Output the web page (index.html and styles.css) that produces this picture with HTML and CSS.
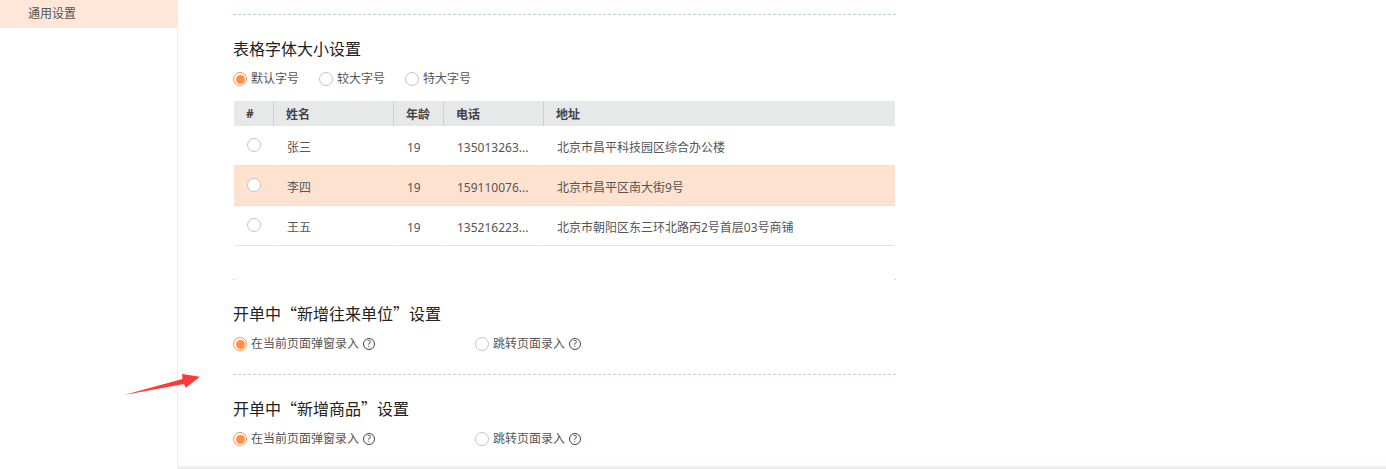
FILE: index.html
```html
<!DOCTYPE html>
<html lang="zh-CN">
<head>
  <meta charset="UTF-8">
  <meta name="viewport" content="width=device-width, initial-scale=1.0">
  <title>通用设置</title>
  <link rel="stylesheet" href="styles.css">
</head>
<body>

  <div class="layout">
    <!-- 左侧菜单 -->
    <div class="sidebar">
      <div class="menu-item active">通用设置</div>
    </div>

    <!-- 设置内容 -->
    <div class="content">
      <div class="divider first"></div>

      <div class="section">
        <h2>表格字体大小设置</h2>
        <div class="radio-row">
          <label class="radio-item checked"><span class="radio"></span>默认字号</label>
          <label class="radio-item"><span class="radio"></span>较大字号</label>
          <label class="radio-item"><span class="radio"></span>特大字号</label>
        </div>
        <table class="demo-table">
          <thead>
            <tr>
              <th class="col-check">#</th>
              <th class="col-name">姓名</th>
              <th class="col-age">年龄</th>
              <th class="col-phone">电话</th>
              <th>地址</th>
            </tr>
          </thead>
          <tbody>
            <tr>
              <td class="col-check"><span class="radio"></span></td>
              <td>张三</td>
              <td>19</td>
              <td>135013263...</td>
              <td>北京市昌平科技园区综合办公楼</td>
            </tr>
            <tr class="selected">
              <td class="col-check"><span class="radio"></span></td>
              <td>李四</td>
              <td>19</td>
              <td>159110076...</td>
              <td>北京市昌平区南大街9号</td>
            </tr>
            <tr>
              <td class="col-check"><span class="radio"></span></td>
              <td>王五</td>
              <td>19</td>
              <td>135216223...</td>
              <td>北京市朝阳区东三环北路丙2号首层03号商铺</td>
            </tr>
          </tbody>
        </table>
      </div>

      <div class="dots"><span></span><span></span></div>

      <div class="section">
        <h2>开单中“新增往来单位”设置</h2>
        <div class="radio-row wide">
          <label class="radio-item checked"><span class="radio"></span>在当前页面弹窗录入<span class="help">?</span></label>
          <label class="radio-item"><span class="radio"></span>跳转页面录入<span class="help">?</span></label>
        </div>
      </div>

      <div class="divider"></div>

      <div class="section">
        <h2>开单中“新增商品”设置</h2>
        <div class="radio-row wide">
          <label class="radio-item checked"><span class="radio"></span>在当前页面弹窗录入<span class="help">?</span></label>
          <label class="radio-item"><span class="radio"></span>跳转页面录入<span class="help">?</span></label>
        </div>
      </div>
    </div>
  </div>

  <!-- 标注箭头 -->
  <svg class="arrow" width="90" height="35" viewBox="0 0 90 35">
    <polygon points="4,30 62.5,14 62,9 80,11.7 65.7,22.7 64,19" fill="#fb3a3a"/>
  </svg>

  <div class="bottom-shadow"></div>

</body>
</html>
```
FILE: styles.css
```css
html, body {
  height: 100%;
}
body {
  margin: 0;
  overflow: hidden;
  background-color: #fff;
  color: #555;
  font-family: "Noto Sans", "Noto Sans CJK SC", sans-serif;
  font-size: 12px;
}
.layout {
  display: flex;
  height: 100%;
}

/* 左侧菜单 */
.sidebar {
  width: 177px;
  flex-shrink: 0;
  border-right: 1px solid #eee;
}
.menu-item {
  height: 28px;
  line-height: 27px;
  padding-left: 28px;
}
.menu-item.active {
  background-color: #fee6d9;
}

/* 设置内容 */
.content {
  width: 663px;
  margin-left: 55px;
}
.divider {
  height: 0;
  border-top: 1px dashed #b9d3ce;
}
.divider.first {
  margin-top: 14px;
}
.section {
  padding-top: 22px;
}
.section h2 {
  margin: 0;
  height: 22px;
  line-height: 22px;
  font-family: "Noto Sans CJK SC", sans-serif;
  font-size: 16px;
  font-weight: normal;
  color: #222;
}
.dots {
  display: flex;
  justify-content: space-between;
  margin-top: 33px;
}
.dots span {
  width: 1px;
  height: 1px;
  background-color: #b9c9c6;
}

/* 单选框 */
.radio-row {
  display: flex;
  gap: 20px;
  margin-top: 10px;
  height: 20px;
}
.radio-row.wide {
  gap: 0;
  margin-bottom: 20px;
}
.radio-row.wide .radio-item {
  width: 242px;
}
.radio-item {
  display: flex;
  align-items: center;
  line-height: 20px;
}
.radio {
  display: inline-block;
  box-sizing: border-box;
  width: 14px;
  height: 14px;
  margin-right: 4px;
  border: 1px solid #c4c4c4;
  border-radius: 50%;
  background-color: #fff;
  position: relative;
}
.radio-item.checked .radio {
  border-color: #ff8f4a;
}
.radio-item.checked .radio::after {
  content: "";
  position: absolute;
  left: 1.5px;
  top: 1.5px;
  width: 9px;
  height: 9px;
  border-radius: 50%;
  background-color: #ff8f4a;
}
.help {
  display: inline-block;
  box-sizing: border-box;
  width: 12px;
  height: 12px;
  margin-left: 4px;
  border: 1px solid #444;
  border-radius: 50%;
  font-size: 9px;
  line-height: 10px;
  text-align: center;
  color: #444;
}

/* 示例表格 */
.demo-table {
  width: 661px;
  margin: 12px 0 0 1px;
  border-collapse: separate;
  border-spacing: 0;
  table-layout: fixed;
}
.demo-table th {
  box-sizing: border-box;
  height: 25px;
  padding: 0 0 0 12px;
  background-color: #e7e8ea;
  border-right: 1px solid #cfd0d2;
  font-weight: bold;
  color: #444;
  text-align: left;
}
.demo-table th:last-child {
  border-right: none;
}
.demo-table td {
  box-sizing: border-box;
  height: 40px;
  padding: 3px 0 0 13px;
  border-right: 1px solid transparent;
  border-bottom: 1px solid #e2e2e2;
}
.demo-table .col-check {
  width: 40px;
  padding: 0;
  text-align: center;
}
.demo-table th.col-check {
  padding-right: 7px;
}
.col-name {
  width: 120px;
}
.col-age {
  width: 50px;
}
.col-phone {
  width: 100px;
}
.demo-table td .radio {
  margin: 0 0 3px 0;
  vertical-align: middle;
}
.demo-table tr.selected td {
  background-color: #fee2d0;
}

/* 标注箭头 */
.arrow {
  position: absolute;
  left: 120px;
  top: 365px;
}
.bottom-shadow {
  position: absolute;
  left: 178px;
  right: 0;
  bottom: 0;
  height: 8px;
  background: linear-gradient(to bottom, rgba(0, 0, 0, 0), rgba(0, 0, 0, 0.02) 60%, rgba(0, 0, 0, 0.1));
}
```
